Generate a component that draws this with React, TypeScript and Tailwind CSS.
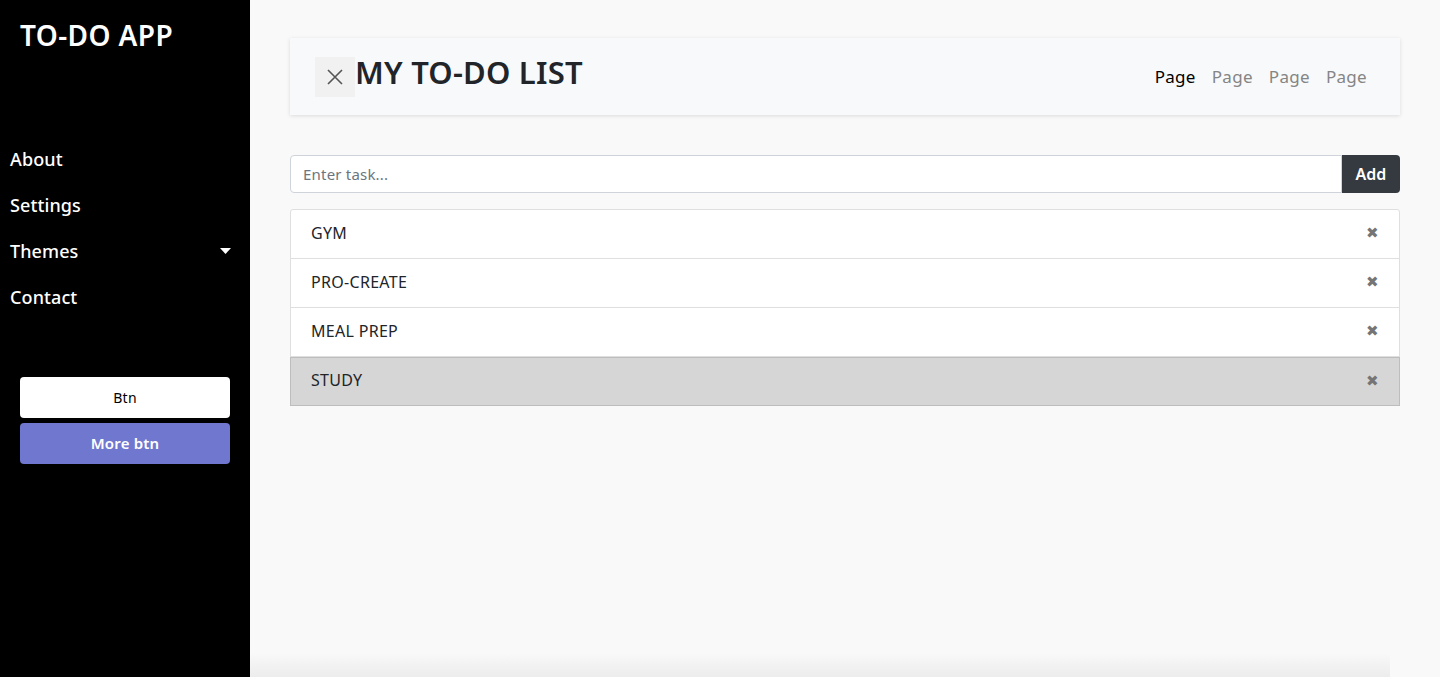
const navItems = ["About", "Settings", "Themes", "Contact"];
const tasks = ["GYM", "PRO-CREATE", "MEAL PREP", "STUDY"];
const pages = ["Page", "Page", "Page", "Page"];

function Sidebar() {
  return (
    <aside className="w-[250px] shrink-0 bg-black text-white flex flex-col">
      <h1 className="pl-[20px] pt-[17px] text-[28px] font-semibold leading-[36px] tracking-[0.4px]">
        TO-DO APP
      </h1>
      <nav className="mt-[83px] flex flex-col">
        {navItems.map((item) => (
          <a
            key={item}
            href="#"
            className="h-[46px] pl-[10px] pr-[20px] flex items-center justify-between text-[18px] font-medium tracking-[0.1px]"
          >
            {item}
            {item === "Themes" && (
              <svg width="11" height="6" viewBox="0 0 11 6" className="mr-[-1px]">
                <path d="M0 0h11L5.5 6z" fill="white" />
              </svg>
            )}
          </a>
        ))}
      </nav>
      <div className="mt-[57px] px-[20px] flex flex-col gap-[5px]">
        <button className="h-[41px] rounded-[4px] bg-white text-black text-[14px] tracking-[0.3px]">Btn</button>
        <button className="h-[41px] rounded-[4px] bg-[#6f77cf] text-white text-[15px] font-semibold tracking-[0.2px]">
          More btn
        </button>
      </div>
    </aside>
  );
}

function Header() {
  return (
    <div className="h-[77px] bg-[#f8f9fa] shadow-[0_1px_4px_rgba(0,0,0,0.12)] flex items-center justify-between pl-[25px] pr-[33px]">
      <div className="flex items-center">
        <button className="w-[40px] h-[40px] bg-[#f1f1f1] flex items-center justify-center text-[#555]">
          <svg width="18" height="18" viewBox="0 0 18 18" stroke="currentColor" strokeWidth="1.6">
            <path d="M2 2l14 14M16 2L2 16" />
          </svg>
        </button>
        <span className="mb-[8px] text-[31px] font-semibold text-[#212529] tracking-[0.2px] leading-none">
          MY TO-DO LIST
        </span>
      </div>
      <div className="flex items-center gap-[16px] text-[17px] tracking-[0.3px]">
        {pages.map((p, i) => (
          <a key={i} href="#" className={i === 0 ? "text-black" : "text-[#858585]"}>
            {p}
          </a>
        ))}
      </div>
    </div>
  );
}

export default function App() {
  return (
    <div
      className="flex h-[677px] w-[1440px] overflow-hidden"
      style={{ fontFamily: '"Noto Sans", "Open Sans", sans-serif' }}
    >
      <Sidebar />
      <main className="flex-1 bg-[#f9f9f9] flex flex-col">
        <div className="pl-[40px] pr-[40px] pt-[38px]">
          <Header />
          <div className="mt-[40px] flex">
            <input
              placeholder="Enter task..."
              className="flex-1 h-[38px] bg-white border border-[#ced4da] rounded-l-[4px] px-[12px] text-[15px] tracking-[0.2px] placeholder:text-[#6c757d] outline-none"
            />
            <button className="w-[58px] h-[38px] bg-[#343a40] text-white rounded-r-[4px] text-[16px] font-semibold">
              Add
            </button>
          </div>
          <ul className="mt-[16px] bg-white border border-[#dfdfdf] rounded-[3px]">
            {tasks.map((t, i) => {
              const last = i === tasks.length - 1;
              return (
                <li
                  key={t}
                  className={
                    last
                      ? "h-[49px] flex items-center justify-between pl-[20px] pr-[20px] pb-[3px] bg-[#d6d6d6] border border-[#bdbdbd] -mx-px -mb-px text-[16px] tracking-[0.3px] text-[#212529]"
                      : "h-[49px] flex items-center justify-between pl-[20px] pr-[20px] pb-[3px] border-b border-[#dfdfdf] text-[16px] tracking-[0.3px] text-[#212529]"
                  }
                >
                  {t}
                  <span className="text-[#757575] text-[15px]">✖</span>
                </li>
              );
            })}
          </ul>
        </div>
        <div className="mt-auto h-[24px] bg-gradient-to-b from-[#f9f9f9] to-[#ececec] mr-[50px]" />
      </main>
    </div>
  );
}
